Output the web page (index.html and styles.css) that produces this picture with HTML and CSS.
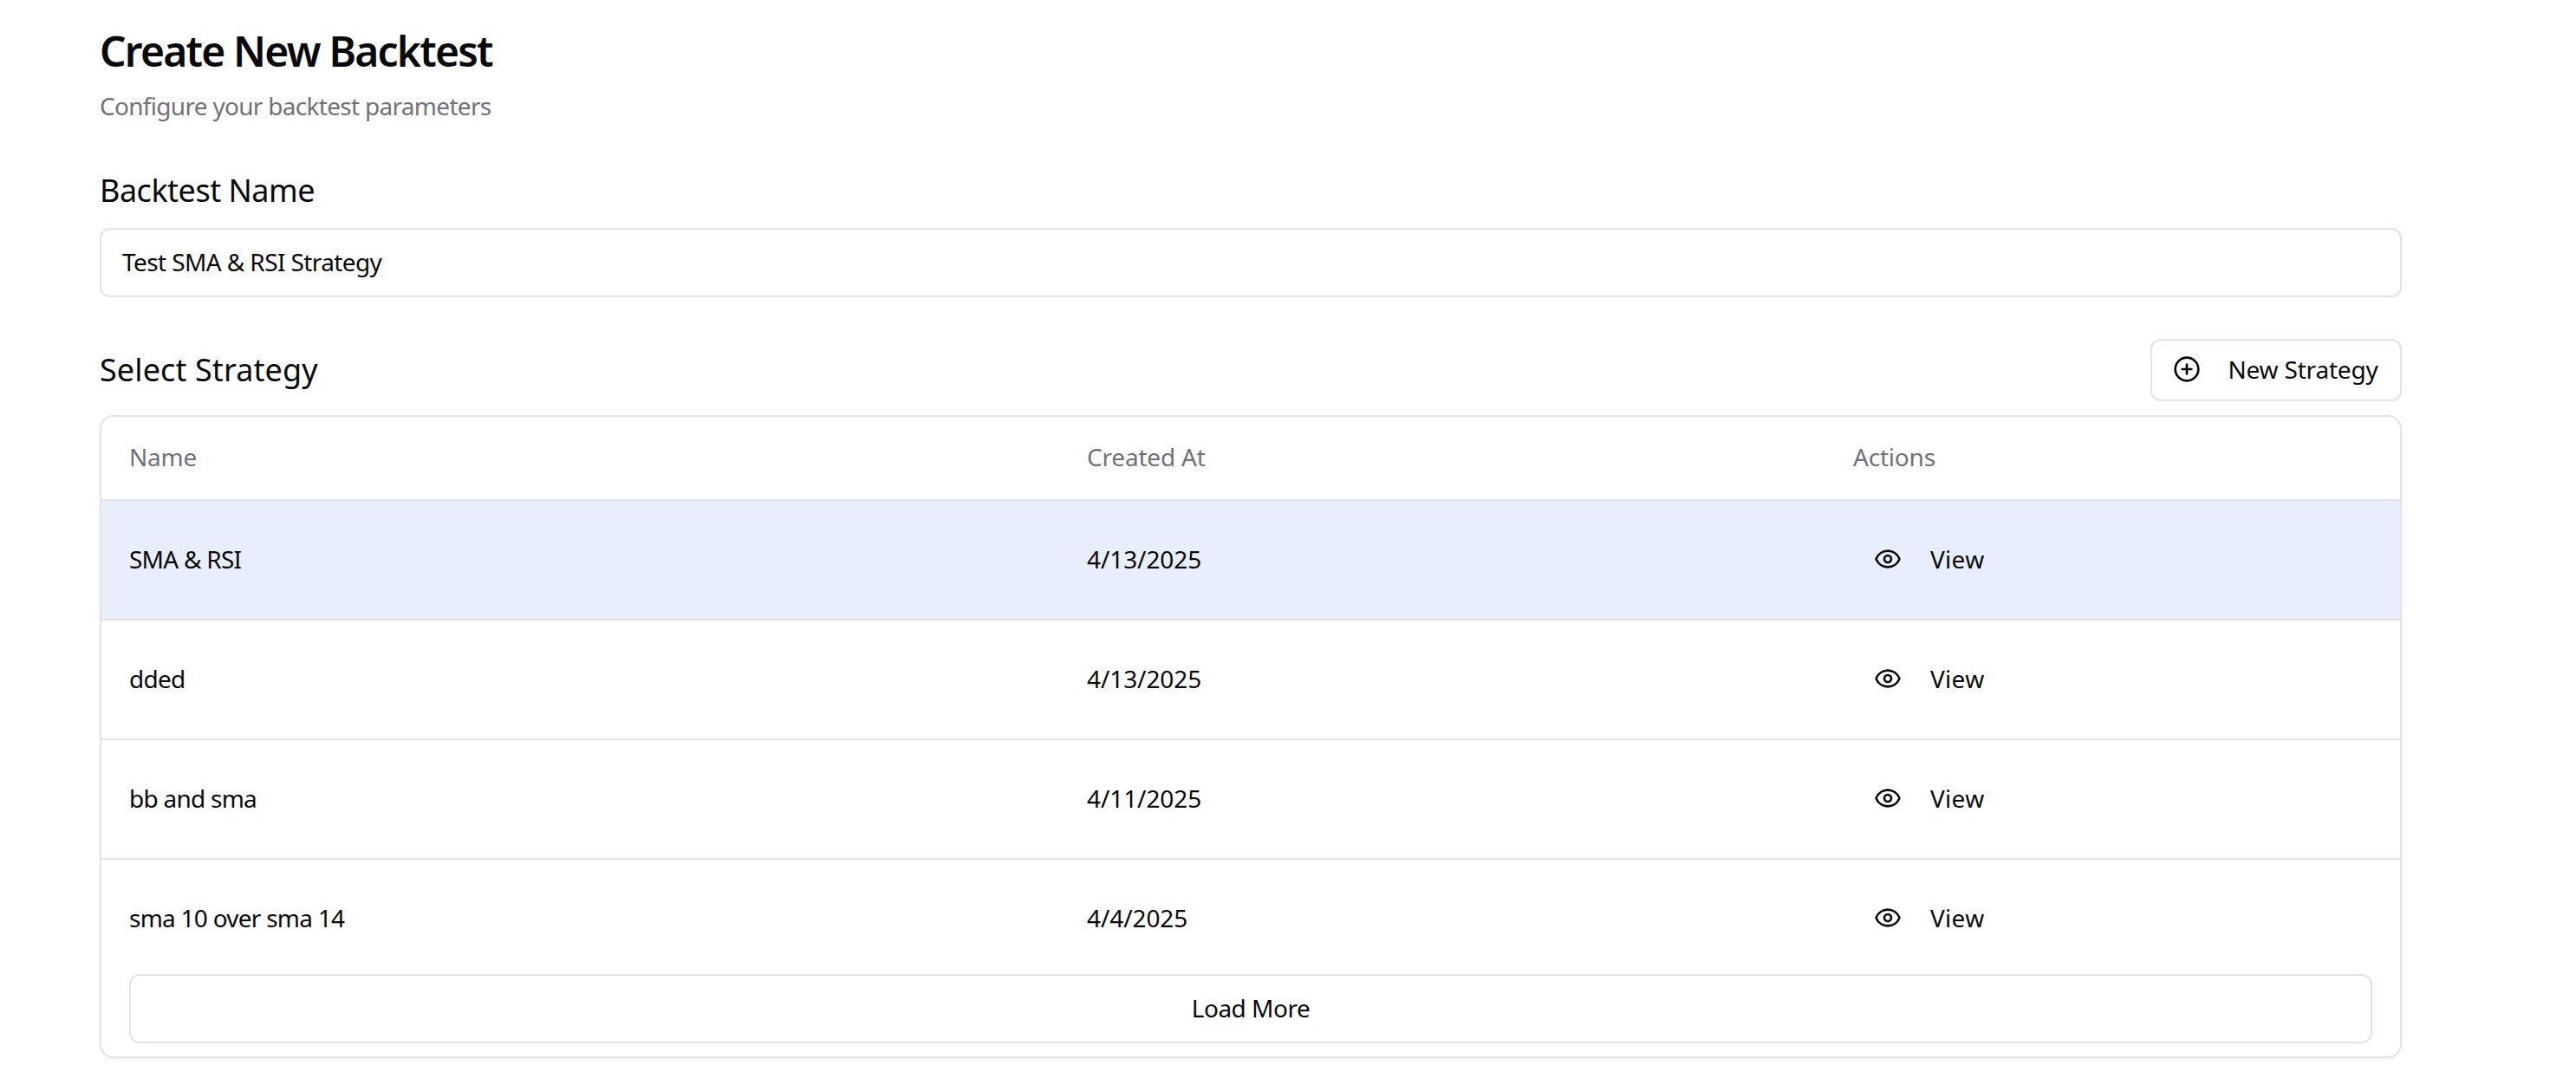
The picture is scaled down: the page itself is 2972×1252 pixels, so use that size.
FILE: index.html
```html
<!DOCTYPE html>
<html lang="en">
<head>
<meta charset="utf-8">
<title>Create New Backtest</title>
<link rel="stylesheet" href="styles.css">
</head>
<body>
<main class="page">
  <header class="head">
    <h1 class="title">Create New Backtest</h1>
    <p class="subtitle">Configure your backtest parameters</p>
  </header>
  <section class="field">
    <label class="label" for="name">Backtest Name</label>
    <input class="input" id="name" type="text" value="Test SMA &amp; RSI Strategy">
  </section>
  <section class="strategy">
    <div class="strategy-head">
      <h2 class="label label-wide">Select Strategy</h2>
      <button class="btn btn-new" type="button">
        <svg class="icon" viewBox="0 0 24 24"><circle cx="12" cy="12" r="10"/><path d="M8 12h8"/><path d="M12 8v8"/></svg>
        <span>New Strategy</span>
      </button>
    </div>
    <div class="card">
      <div class="scroll">
        <table class="table">
          <colgroup><col class="col-name"><col class="col-date"><col></colgroup>
          <thead>
            <tr><th>Name</th><th>Created At</th><th>Actions</th></tr>
          </thead>
          <tbody>
            <tr class="selected"><td>SMA &amp; RSI</td><td class="date">4/13/2025</td><td><button class="view" type="button"><svg class="icon" viewBox="0 0 24 24"><path d="M2.062 12.348a1 1 0 0 1 0-.696 10.75 10.75 0 0 1 19.876 0 1 1 0 0 1 0 .696 10.75 10.75 0 0 1-19.876 0"/><circle cx="12" cy="12" r="3"/></svg><span>View</span></button></td></tr>
            <tr><td>dded</td><td class="date">4/13/2025</td><td><button class="view" type="button"><svg class="icon" viewBox="0 0 24 24"><path d="M2.062 12.348a1 1 0 0 1 0-.696 10.75 10.75 0 0 1 19.876 0 1 1 0 0 1 0 .696 10.75 10.75 0 0 1-19.876 0"/><circle cx="12" cy="12" r="3"/></svg><span>View</span></button></td></tr>
            <tr><td>bb and sma</td><td class="date">4/11/2025</td><td><button class="view" type="button"><svg class="icon" viewBox="0 0 24 24"><path d="M2.062 12.348a1 1 0 0 1 0-.696 10.75 10.75 0 0 1 19.876 0 1 1 0 0 1 0 .696 10.75 10.75 0 0 1-19.876 0"/><circle cx="12" cy="12" r="3"/></svg><span>View</span></button></td></tr>
            <tr><td>sma 10 over sma 14</td><td class="date">4/4/2025</td><td><button class="view" type="button"><svg class="icon" viewBox="0 0 24 24"><path d="M2.062 12.348a1 1 0 0 1 0-.696 10.75 10.75 0 0 1 19.876 0 1 1 0 0 1 0 .696 10.75 10.75 0 0 1-19.876 0"/><circle cx="12" cy="12" r="3"/></svg><span>View</span></button></td></tr>
          </tbody>
        </table>
      </div>
      <div class="more">
        <button class="btn btn-more" type="button">Load More</button>
      </div>
    </div>
  </section>
</main>
</body>
</html>
```

FILE: styles.css
```css
* { box-sizing: border-box; }
html, body { margin: 0; height: 100%; background: #fff; overflow: hidden; }
body { font-family: "Noto Sans", "Open Sans", sans-serif; color: #09090b; font-size: 28px; }
.page { width: 2771px; padding: 31px 0 0 115px; }
.head { height: 107px; }
.title { margin: 0; font-size: 48px; line-height: 56px; font-weight: 600; letter-spacing: -1.8px; }
.subtitle { margin: 15px 0 0; font-size: 28px; line-height: 40px; color: #71717a; letter-spacing: -0.7px; }
.field { margin-top: 60px; }
.label { display: block; margin: 0; font-size: 36px; line-height: 44px; font-weight: 400; letter-spacing: -0.5px; color: #09090b; }
.label-wide { letter-spacing: 0.1px; }
.input { display: block; width: 100%; height: 80px; margin-top: 21px; padding: 0 24px 2px; border: 2px solid #e4e4e7; border-radius: 12px; font: inherit; color: #09090b; letter-spacing: -0.6px; background: #fff; outline: none; }
.strategy { margin-top: 48px; }
.strategy-head { display: flex; align-items: center; justify-content: space-between; height: 72px; }
.btn { display: flex; align-items: center; justify-content: center; font: inherit; color: #09090b; background: #fff; border: 2px solid #e4e4e7; border-radius: 12px; letter-spacing: -0.5px; }
.btn-new { width: 290px; height: 72px; gap: 32px; padding: 0 2px 2px 0; letter-spacing: -0.2px; }
.icon { width: 32px; height: 32px; flex: none; fill: none; stroke: currentColor; stroke-width: 2; stroke-linecap: round; stroke-linejoin: round; }
.card { margin-top: 16px; height: 742px; border: 2px solid #e4e4e7; border-radius: 16px; box-shadow: 0 2px 4px rgba(0, 0, 0, 0.05); background: #fff; overflow: hidden; }
.scroll { height: 626px; overflow: hidden; }
.table { width: 100%; border-collapse: collapse; table-layout: fixed; }
.col-name { width: 1105px; }
.col-date { width: 884px; }
th { height: 96px; padding: 0 32px 4px; text-align: left; font-weight: 400; color: #71717a; letter-spacing: -0.2px; border-bottom: 2px solid #e4e4e7; }
td { height: 138px; padding: 0 32px 2px; letter-spacing: -0.75px; border-bottom: 2px solid #e4e4e7; }
td.date { letter-spacing: -0.1px; }
.selected td { background: #e8eefc; }
.view { display: flex; align-items: center; gap: 33px; padding: 0; margin-left: 24px; border: 0; background: none; font: inherit; letter-spacing: 0.3px; color: #09090b; }
.more { padding: 17px 32px 0; }
.btn-more { width: 100%; height: 80px; padding-bottom: 4px; }
```
